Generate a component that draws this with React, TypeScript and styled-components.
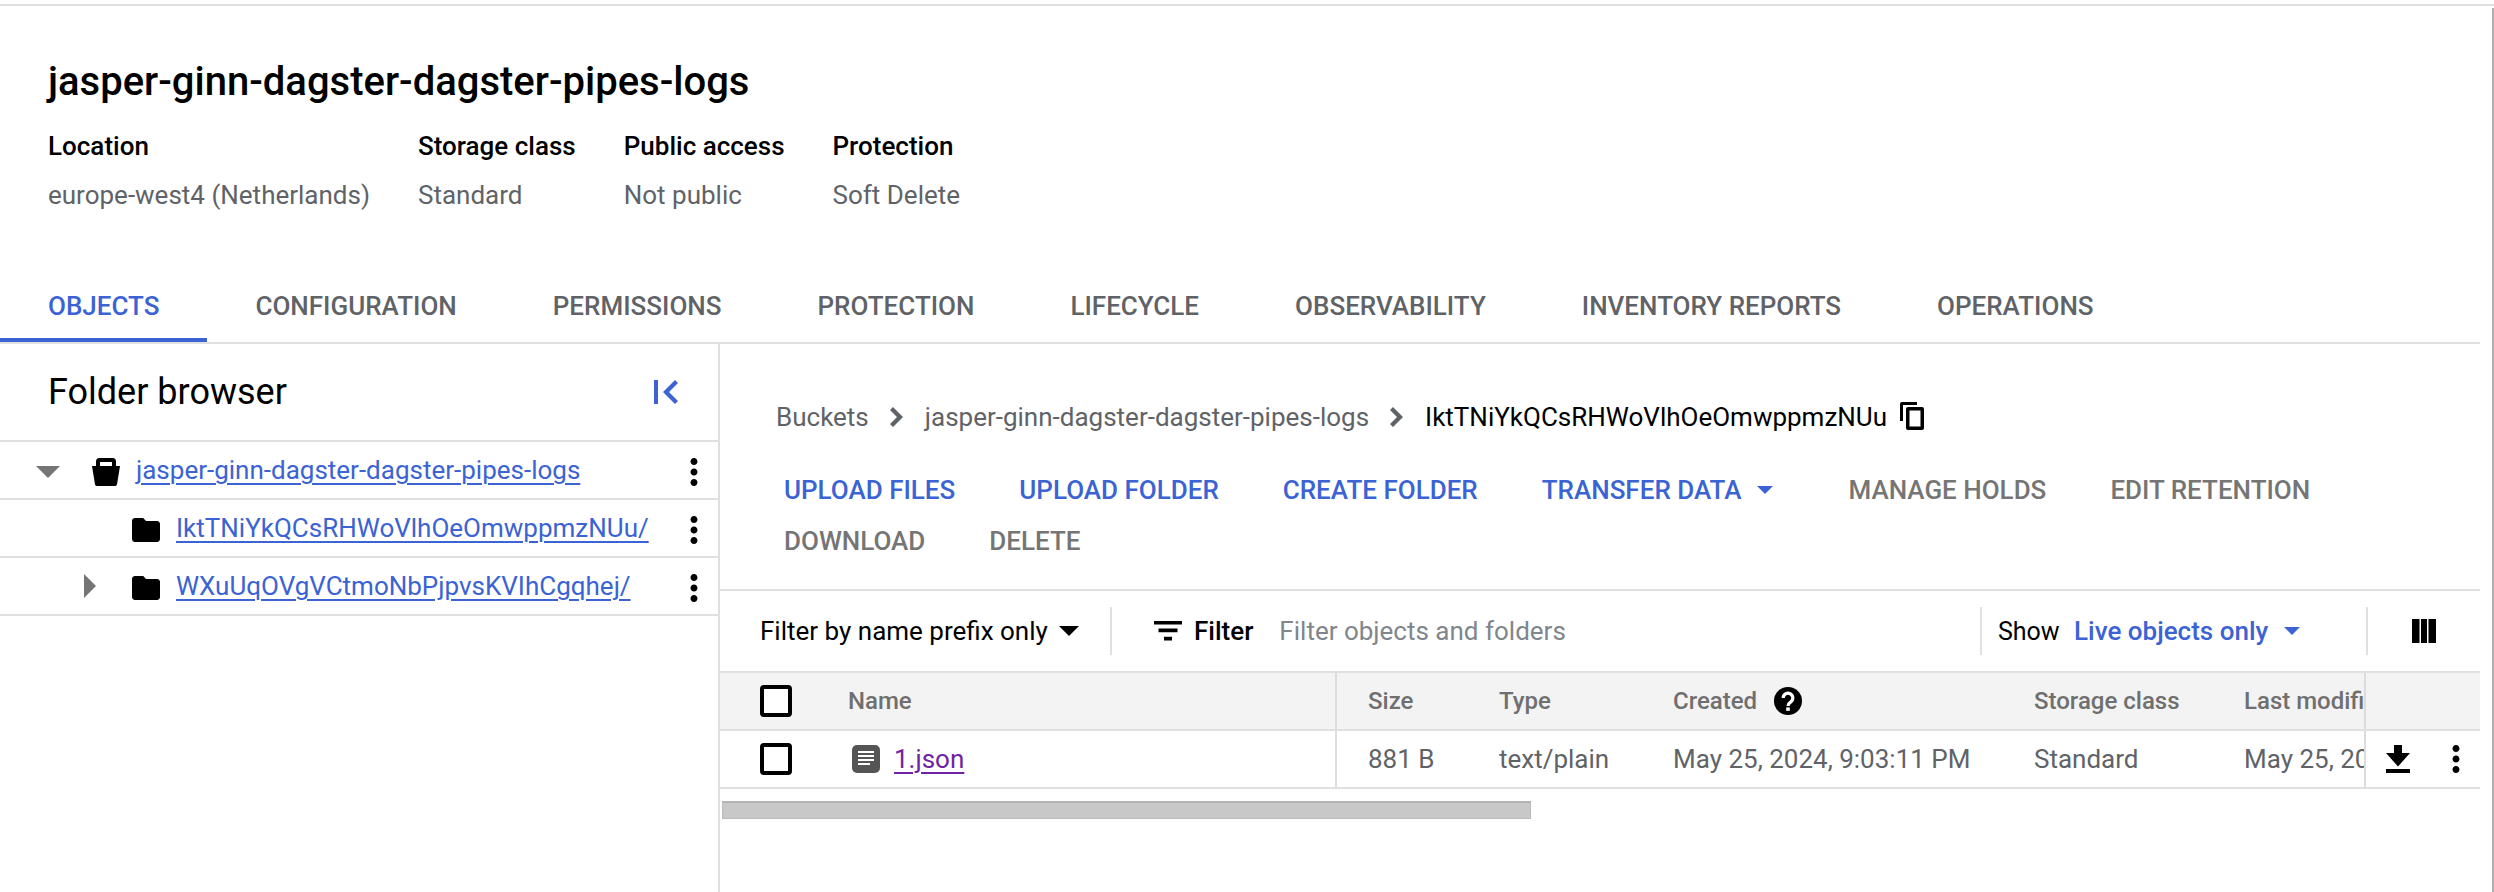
import React from "react";
import styled, { createGlobalStyle } from "styled-components";

const Global = createGlobalStyle`
  html, body { margin: 0; padding: 0; background: #fff; }
  body { font-family: Roboto, "Liberation Sans", sans-serif; color: #000; }
  * { box-sizing: border-box; }
`;

const BLUE = "#3b63d4";
const LINE = "#e0e0e0";

const Page = styled.div`
  width: 2494px; height: 892px; overflow: hidden; background: #fff;
  padding-top: 4px; padding-right: 14px;
  position: relative;
`;
const EdgeLine = styled.div`
  position: absolute; top: 8px; right: 0; bottom: 0; width: 2px; background: #b0b0b0;
`;
const TopRule = styled.div`height: 2px; background: ${LINE}; margin-right: -14px;`;
const Header = styled.header`padding: 54px 48px 0;`;
const Title = styled.h1`margin: 0; font-size: 40px; line-height: 44px; font-weight: 500;`;
const Meta = styled.div`display: flex; gap: 48px; margin-top: 22px;`;
const MetaCol = styled.div`display: flex; flex-direction: column; gap: 9px;`;
const MetaLabel = styled.div`font-size: 26px; line-height: 40px; font-weight: 500;`;
const MetaValue = styled.div`font-size: 26px; line-height: 40px; color: #5f6368;`;

const Tabs = styled.nav`display: flex; margin-top: 55px; border-bottom: 2px solid ${LINE}; height: 74px;`;
const Tab = styled.div<{ $active?: boolean }>`
  height: 72px; padding: 4px 48px 0; display: flex; align-items: center;
  font-size: 26px; font-weight: 500; white-space: nowrap;
  color: ${(p) => (p.$active ? BLUE : "#5f6368")};
  border-bottom: 4px solid ${(p) => (p.$active ? BLUE : "transparent")};
`;

const Content = styled.div`display: flex; height: 548px;`;
const Side = styled.aside`width: 720px; flex: none; border-right: 2px solid ${LINE};`;
const SideHead = styled.div`
  height: 96px; display: flex; align-items: center; justify-content: space-between;
  padding: 0 40px 0 48px;
`;
const SideTitle = styled.div`font-size: 36px; font-weight: 400;`;
const TreeRow = styled.div<{ $indent: number }>`
  height: 58px; border-top: 2px solid ${LINE}; display: flex; align-items: center;
  padding-left: ${(p) => p.$indent}px; position: relative;
  &:last-child { height: 60px; border-bottom: 2px solid ${LINE}; }
`;
const RowIcon = styled.span`display: flex; flex: none; margin-top: 4px;`;
const Spacer = styled.span<{ $w: number }>`width: ${(p) => p.$w}px; flex: none;`;
const TreeLink = styled.a`
  font-size: 26px; color: ${BLUE}; text-decoration: underline; text-underline-offset: 4px;
  text-decoration-thickness: 2px; white-space: nowrap; margin-left: 16px;
`;
const RowMenu = styled.span`position: absolute; right: 3px; top: 9px; display: flex;`;

const Main = styled.main`flex: 1; min-width: 0;`;
const Crumbs = styled.div`
  height: 40px; margin-top: 53px; padding-left: 56px; display: flex; align-items: center;
  font-size: 26px; color: #5f6368; white-space: nowrap;
`;
const CrumbChevron = styled.span`display: flex; margin: 0 22px 0 20px;`;
const CrumbCurrent = styled.span`color: #000;`;
const CopyIcon = styled.span`display: flex; margin: -2px 0 0 13px;`;
const Actions = styled.div`
  margin-top: 33px; padding: 0 0 28px 64px; display: flex; flex-wrap: wrap; column-gap: 64px; row-gap: 11px;
  border-bottom: 2px solid ${LINE};
`;
const ActionButton = styled.div<{ $disabled?: boolean; $menu?: boolean }>`
  height: 40px; display: flex; align-items: center; gap: 16px; white-space: nowrap;
  font-size: 26px; font-weight: 500; color: ${(p) => (p.$disabled ? "#757575" : BLUE)};
  padding-right: ${(p) => (p.$menu ? 11 : 0)}px;
`;
const Toolbar = styled.div`height: 80px; display: flex; align-items: center; font-size: 26px; white-space: nowrap;`;
const Prefix = styled.div`margin-left: 40px; width: 350px; display: flex; align-items: center; gap: 11px;`;
const VRule = styled.div`width: 2px; height: 48px; background: ${LINE}; flex: none;`;
const FilterLabel = styled.div`display: flex; align-items: center; gap: 12px; font-weight: 500; margin-left: 42px;`;
const Placeholder = styled.div`color: #80868b; margin-left: 26px; flex: 1;`;
const ShowLabel = styled.div`margin-left: 16px; width: 60px; font-size: 25px;`;
const ShowValue = styled.div`margin-left: 16px; color: ${BLUE}; font-weight: 500; display: flex; align-items: center; gap: 16px; width: 292px;`;
const ColumnsBtn = styled.div`margin-left: 44px; display: flex; width: 68px;`;

const Table = styled.div`border-top: 2px solid ${LINE};`;
const COLS = "128px 489px 162px 174px 361px 210px 120px 116px";
const Row = styled.div<{ $head?: boolean }>`
  display: grid; grid-template-columns: ${COLS}; height: 58px;
  border-bottom: 2px solid ${LINE};
  background: ${(p) => (p.$head ? "#f3f3f3" : "#fff")};
  font-size: ${(p) => (p.$head ? 24 : 26)}px; color: ${(p) => (p.$head ? "#6f6f6f" : "#5f6368")};
  font-weight: ${(p) => (p.$head ? 500 : 400)};
`;
const Cell = styled.div`display: flex; align-items: center; overflow: hidden; white-space: nowrap;`;
const CheckCell = styled(Cell)`padding-left: 40px;`;
const NameCell = styled(Cell)`border-right: 2px solid #dcdcdc; gap: 14px; padding-left: 4px;`;
const NameHead = styled(Cell)`border-right: 2px solid #dcdcdc;`;
const SizeCell = styled(Cell)`padding-left: 31px;`;
const CreatedHead = styled(Cell)`gap: 17px;`;
const StickyCell = styled(Cell)`border-left: 2px solid #dcdcdc; padding-left: 20px; gap: 25px;`;
const Check = styled.div`width: 32px; height: 32px; border: 4px solid #000; border-radius: 4px; background: #fff;`;
const FileLink = styled.a`
  color: #6f23a4; text-decoration: underline; text-decoration-thickness: 2px; text-underline-offset: 4px;
`;
const Scrollbar = styled.div`
  margin: 12px 0 0 2px; width: 809px; height: 18px; background: #c8c8c8;
  border: 1px solid #bbb; border-top: 2px solid #b4b4b4;
`;

const Ic = ({ d, size, color = "#000" }: { d: string; size: number; color?: string }) => (
  <svg width={size} height={size} viewBox="0 0 24 24" fill={color} style={{ display: "block", flex: "none" }}>
    <path d={d} />
  </svg>
);
const KEBAB = "M12 8c1.1 0 2-.9 2-2s-.9-2-2-2-2 .9-2 2 .9 2 2 2zm0 2c-1.1 0-2 .9-2 2s.9 2 2 2 2-.9 2-2-.9-2-2-2zm0 6c-1.1 0-2 .9-2 2s.9 2 2 2 2-.9 2-2-.9-2-2-2z";

const Caret = ({ w, h, color }: { w: number; h: number; color: string }) => (
  <svg width={w} height={h} viewBox="0 0 10 5" preserveAspectRatio="none" fill={color} style={{ display: "block", flex: "none" }}>
    <path d="M0 0h10L5 5z" />
  </svg>
);
const CaretRight = () => (
  <svg width="12" height="24" viewBox="0 0 12 24" fill="#757575" style={{ display: "block", flex: "none" }}>
    <path d="M0 0l12 12L0 24z" />
  </svg>
);
const CollapseIcon = () => (
  <svg width="24" height="24" viewBox="0 0 24 24" fill={BLUE} style={{ display: "block" }}>
    <path d="M0 0h4v24H0zM24 3l-3-3L9 12l12 12 3-3-9-9z" />
  </svg>
);
const BucketIcon = () => (
  <svg width="28" height="28" viewBox="0 0 28 28" fill="#000" style={{ display: "block", flex: "none" }}>
    <path fillRule="evenodd" d="M4 8V3.5A3.5 3.5 0 0 1 7.5 0h13A3.5 3.5 0 0 1 24 3.5V8h4l-3 18.5a2 2 0 0 1-2 1.5H5a2 2 0 0 1-2-1.5L0 8zm4 0h12V4H8z" />
  </svg>
);
const FolderIcon = () => (
  <svg width="28" height="24" viewBox="2 4 20 16" preserveAspectRatio="none" fill="#000" style={{ display: "block", flex: "none" }}>
    <path d="M10 4H4c-1.1 0-2 .9-2 2v12c0 1.1.9 2 2 2h16c1.1 0 2-.9 2-2V8c0-1.1-.9-2-2-2h-8l-2-2z" />
  </svg>
);
const ChevronIcon = () => (
  <svg width="14" height="20" viewBox="0 0 14 20" fill="#5f6368" style={{ display: "block", flex: "none" }}>
    <path d="M1 3l3-3 10 10-10 10-3-3 7-7z" />
  </svg>
);
const CopyGlyph = () => (
  <svg width="24" height="28" viewBox="0 0 24 28" fill="#000" style={{ display: "block", flex: "none" }}>
    <path d="M0 2a2 2 0 0 1 2-2h15v3H3v16H0z" />
    <path fillRule="evenodd" d="M8 5h14a2 2 0 0 1 2 2v19a2 2 0 0 1-2 2H8a2 2 0 0 1-2-2V7a2 2 0 0 1 2-2zm1.5 3.5v16h11v-16z" />
  </svg>
);
const FilterIcon = () => (
  <svg width="28" height="20" viewBox="0 0 28 20" fill="#000" style={{ display: "block", flex: "none" }}>
    <path d="M0 0h28v3.6H0zM4.5 7.6h19v3.6h-19zM10 15.8h8v3.6h-8z" />
  </svg>
);
const DownloadIcon = () => (
  <svg width="24" height="28" viewBox="0 0 24 28" fill="#000" style={{ display: "block", flex: "none" }}>
    <path d="M8 0h8v8h8L12 21.5 0 8h8zM0 24h24v4H0z" />
  </svg>
);
const DocIcon = () => (
  <svg width="28" height="28" viewBox="0 0 28 28" style={{ display: "block", flex: "none" }}>
    <rect width="28" height="28" rx="5" fill="#555" />
    <path d="M6 7h16M6 11h16M6 15h16M6 19h12" stroke="#fff" strokeWidth="2" />
  </svg>
);
const ColumnsIcon = () => (
  <svg width="24" height="24" viewBox="0 0 24 24" fill="#000" style={{ display: "block" }}>
    <path d="M0 0h7.5v24H0zM9 0h6v24H9zM16.5 0H24v24h-7.5z" />
  </svg>
);
const HelpIcon = () => (
  <svg width="28" height="28" viewBox="0 0 28 28" style={{ display: "block", flex: "none" }}>
    <circle cx="14" cy="14" r="14" fill="#000" />
    <path d="M9.2 11a4.8 4.8 0 1 1 7.6 3.9c-1.7 1.2-2.8 2-2.8 4.1" fill="none" stroke="#fff" strokeWidth="3.2" />
    <rect x="12.2" y="20.4" width="3.6" height="3.4" fill="#fff" />
  </svg>
);

export default function App() {
  return (
    <Page>
      <Global />
      <EdgeLine />
      <TopRule />
      <Header>
        <Title>jasper-ginn-dagster-dagster-pipes-logs</Title>
        <Meta>
          <MetaCol><MetaLabel>Location</MetaLabel><MetaValue>europe-west4 (Netherlands)</MetaValue></MetaCol>
          <MetaCol><MetaLabel>Storage class</MetaLabel><MetaValue>Standard</MetaValue></MetaCol>
          <MetaCol><MetaLabel>Public access</MetaLabel><MetaValue>Not public</MetaValue></MetaCol>
          <MetaCol><MetaLabel>Protection</MetaLabel><MetaValue>Soft Delete</MetaValue></MetaCol>
        </Meta>
      </Header>
      <Tabs>
        <Tab $active>OBJECTS</Tab>
        <Tab>CONFIGURATION</Tab>
        <Tab>PERMISSIONS</Tab>
        <Tab>PROTECTION</Tab>
        <Tab>LIFECYCLE</Tab>
        <Tab>OBSERVABILITY</Tab>
        <Tab>INVENTORY REPORTS</Tab>
        <Tab>OPERATIONS</Tab>
      </Tabs>
      <Content>
        <Side>
          <SideHead>
            <SideTitle>Folder browser</SideTitle>
            <CollapseIcon />
          </SideHead>
          <TreeRow $indent={36}>
            <RowIcon><Caret w={24} h={12} color="#757575" /></RowIcon>
            <Spacer $w={32} />
            <RowIcon><BucketIcon /></RowIcon>
            <TreeLink>jasper-ginn-dagster-dagster-pipes-logs</TreeLink>
            <RowMenu><Ic d={KEBAB} size={42} /></RowMenu>
          </TreeRow>
          <TreeRow $indent={132}>
            <RowIcon><FolderIcon /></RowIcon>
            <TreeLink>IktTNiYkQCsRHWoVlhOeOmwppmzNUu/</TreeLink>
            <RowMenu><Ic d={KEBAB} size={42} /></RowMenu>
          </TreeRow>
          <TreeRow $indent={84}>
            <CaretRight />
            <Spacer $w={36} />
            <RowIcon><FolderIcon /></RowIcon>
            <TreeLink>WXuUqOVgVCtmoNbPjpvsKVIhCgqhej/</TreeLink>
            <RowMenu><Ic d={KEBAB} size={42} /></RowMenu>
          </TreeRow>
        </Side>
        <Main>
          <Crumbs>
            <span>Buckets</span>
            <CrumbChevron><ChevronIcon /></CrumbChevron>
            <span>jasper-ginn-dagster-dagster-pipes-logs</span>
            <CrumbChevron><ChevronIcon /></CrumbChevron>
            <CrumbCurrent>IktTNiYkQCsRHWoVlhOeOmwppmzNUu</CrumbCurrent>
            <CopyIcon><CopyGlyph /></CopyIcon>
          </Crumbs>
          <Actions>
            <ActionButton>UPLOAD FILES</ActionButton>
            <ActionButton>UPLOAD FOLDER</ActionButton>
            <ActionButton>CREATE FOLDER</ActionButton>
            <ActionButton $menu>TRANSFER DATA <Caret w={16} h={8} color={BLUE} /></ActionButton>
            <ActionButton $disabled>MANAGE HOLDS</ActionButton>
            <ActionButton $disabled>EDIT RETENTION</ActionButton>
            <ActionButton $disabled>DOWNLOAD</ActionButton>
            <ActionButton $disabled>DELETE</ActionButton>
          </Actions>
          <Toolbar>
            <Prefix>Filter by name prefix only <Caret w={20} h={10} color="#000" /></Prefix>
            <VRule />
            <FilterLabel><FilterIcon />Filter</FilterLabel>
            <Placeholder>Filter objects and folders</Placeholder>
            <VRule />
            <ShowLabel>Show</ShowLabel>
            <ShowValue>Live objects only <Caret w={16} h={8} color={BLUE} /></ShowValue>
            <VRule />
            <ColumnsBtn><ColumnsIcon /></ColumnsBtn>
          </Toolbar>
          <Table>
            <Row $head>
              <CheckCell><Check /></CheckCell>
              <NameHead>Name</NameHead>
              <SizeCell>Size</SizeCell>
              <Cell>Type</Cell>
              <CreatedHead>Created <HelpIcon /></CreatedHead>
              <Cell>Storage class</Cell>
              <Cell>Last modified</Cell>
              <StickyCell />
            </Row>
            <Row>
              <CheckCell><Check /></CheckCell>
              <NameCell><DocIcon /><FileLink>1.json</FileLink></NameCell>
              <SizeCell>881 B</SizeCell>
              <Cell>text/plain</Cell>
              <Cell>May 25, 2024, 9:03:11 PM</Cell>
              <Cell>Standard</Cell>
              <Cell>May 25, 2024, 9:03:11 PM</Cell>
              <StickyCell><DownloadIcon /><Ic d={KEBAB} size={42} /></StickyCell>
            </Row>
          </Table>
          <Scrollbar />
        </Main>
      </Content>
    </Page>
  );
}
